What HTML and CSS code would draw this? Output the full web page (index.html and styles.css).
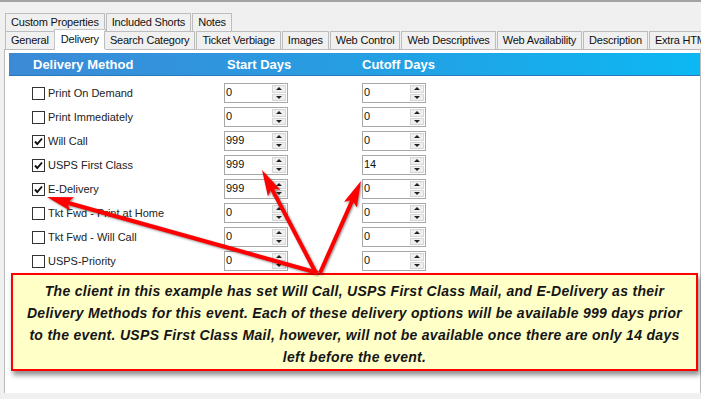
FILE: index.html
```html
<!DOCTYPE html>
<html lang="en">
<head>
    <meta charset="UTF-8">
    <title>Event - Delivery</title>
    <link rel="stylesheet" href="styles.css">
</head>
<body>
    <div class="window">
        <!-- Tab strip -->
        <div class="tabstrip">
            <div class="tab-row">
                <span class="tab">Custom Properties</span>
                <span class="tab">Included Shorts</span>
                <span class="tab">Notes</span>
            </div>
            <div class="tab-row front">
                <span class="tab">General</span>
                <span class="tab active">Delivery</span>
                <span class="tab">Search Category</span>
                <span class="tab">Ticket Verbiage</span>
                <span class="tab">Images</span>
                <span class="tab">Web Control</span>
                <span class="tab">Web Descriptives</span>
                <span class="tab">Web Availability</span>
                <span class="tab">Description</span>
                <span class="tab">Extra HTML</span>
            </div>
        </div>

        <!-- Delivery panel -->
        <div class="panel">
            <div class="grid-head">
                <span>Delivery Method</span>
                <span>Start Days</span>
                <span>Cutoff Days</span>
            </div>

            <div class="methods">
                <div class="method">
                    <label class="check"><span class="box"></span>Print On Demand</label>
                    <div class="spin"><span class="val">0</span><span class="btns"><i class="up"></i><i class="dn"></i></span></div>
                    <div class="spin"><span class="val">0</span><span class="btns"><i class="up"></i><i class="dn"></i></span></div>
                </div>
                <div class="method">
                    <label class="check"><span class="box"></span>Print Immediately</label>
                    <div class="spin"><span class="val">0</span><span class="btns"><i class="up"></i><i class="dn"></i></span></div>
                    <div class="spin"><span class="val">0</span><span class="btns"><i class="up"></i><i class="dn"></i></span></div>
                </div>
                <div class="method">
                    <label class="check"><span class="box"><svg viewBox="0 0 11 11"><path d="M2 5.5 4.3 8 9 2.5"/></svg></span>Will Call</label>
                    <div class="spin"><span class="val">999</span><span class="btns"><i class="up"></i><i class="dn"></i></span></div>
                    <div class="spin"><span class="val">0</span><span class="btns"><i class="up"></i><i class="dn"></i></span></div>
                </div>
                <div class="method">
                    <label class="check"><span class="box"><svg viewBox="0 0 11 11"><path d="M2 5.5 4.3 8 9 2.5"/></svg></span>USPS First Class</label>
                    <div class="spin"><span class="val">999</span><span class="btns"><i class="up"></i><i class="dn"></i></span></div>
                    <div class="spin"><span class="val">14</span><span class="btns"><i class="up"></i><i class="dn"></i></span></div>
                </div>
                <div class="method">
                    <label class="check"><span class="box"><svg viewBox="0 0 11 11"><path d="M2 5.5 4.3 8 9 2.5"/></svg></span>E-Delivery</label>
                    <div class="spin"><span class="val">999</span><span class="btns"><i class="up"></i><i class="dn"></i></span></div>
                    <div class="spin"><span class="val">0</span><span class="btns"><i class="up"></i><i class="dn"></i></span></div>
                </div>
                <div class="method">
                    <label class="check"><span class="box"></span>Tkt Fwd - Print at Home</label>
                    <div class="spin"><span class="val">0</span><span class="btns"><i class="up"></i><i class="dn"></i></span></div>
                    <div class="spin"><span class="val">0</span><span class="btns"><i class="up"></i><i class="dn"></i></span></div>
                </div>
                <div class="method">
                    <label class="check"><span class="box"></span>Tkt Fwd - Will Call</label>
                    <div class="spin"><span class="val">0</span><span class="btns"><i class="up"></i><i class="dn"></i></span></div>
                    <div class="spin"><span class="val">0</span><span class="btns"><i class="up"></i><i class="dn"></i></span></div>
                </div>
                <div class="method">
                    <label class="check"><span class="box"></span>USPS-Priority</label>
                    <div class="spin"><span class="val">0</span><span class="btns"><i class="up"></i><i class="dn"></i></span></div>
                    <div class="spin"><span class="val">0</span><span class="btns"><i class="up"></i><i class="dn"></i></span></div>
                </div>
            </div>

            <!-- Annotation -->
            <div class="callout">
                <p>The client in this example has set Will Call, USPS First Class Mail, and E-Delivery as their<br>
                Delivery Methods for this event. Each of these delivery options will be available 999 days prior<br>
                to the event. USPS First Class Mail, however, will not be available once there are only 14 days<br>
                left before the event.</p>
            </div>
        </div>

        <!-- Annotation arrows -->
        <svg class="arrows" viewBox="0 0 701 399">
            <defs>
                <marker id="head" markerUnits="userSpaceOnUse" viewBox="0 0 26 14" refX="14" refY="7" markerWidth="26" markerHeight="14" orient="auto">
                    <path d="M0 0 L26 7 L0 14 L5 7 Z" fill="#f00"/>
                </marker>
            </defs>
            <line x1="318" y1="273" x2="58.6" y2="200.2" marker-end="url(#head)"/>
            <line x1="316" y1="273" x2="267.6" y2="180.6" marker-end="url(#head)"/>
            <line x1="320" y1="273" x2="356.1" y2="191.9" marker-end="url(#head)"/>
        </svg>
    </div>
</body>
</html>
```

FILE: styles.css
```css
* { margin: 0; padding: 0; box-sizing: border-box; }
body { background: #f0f0f0; font-family: 'Liberation Sans', Arial, sans-serif; color: #1e1e1e; overflow: hidden; }

/* Window */
.window { position: relative; width: 701px; height: 399px; border-top: 2px solid #a3a3a3; }

/* Tabs */
.tabstrip { padding-top: 11px; }
.tab-row { display: flex; align-items: flex-end; height: 18px; padding-left: 5px; white-space: nowrap; }
.tab-row.front { position: relative; z-index: 2; }
.tab { flex-shrink: 0; height: 18px; padding: 0 5px; margin-right: 1px; border: 1px solid #bdbdbd; border-bottom: none; background: #f0f0f0; font-size: 11px; line-height: 16px; letter-spacing: -0.2px; color: #111; }
.tab.active { height: 21px; margin: 0 -1px -1px -2px; padding: 0 6px; background: #fff; border-color: #c6c6c6; line-height: 18px; }
.tab.active + .tab { margin-left: -1px; }

/* Panel */
.panel { margin-left: 4px; width: 697px; background: #fff; border: 1px solid #bcbcbc; border-bottom: none; padding: 3px 0 22px 4px; }
.grid-head { display: grid; grid-template-columns: 194px 135px 1fr; height: 23px; padding-left: 24px; align-items: center; background: linear-gradient(90deg, #3c8ad6, #24a0e4 55%, #0cb8f3); border-bottom: 1px solid #2a78b8; color: #fff; font-size: 13px; font-weight: 700; }

/* Method rows */
.methods { padding-top: 5px; }
.method { display: grid; grid-template-columns: 192px 138px 64px; height: 24px; padding-left: 23px; align-items: center; }
.check { display: flex; align-items: center; gap: 3px; font-size: 11px; color: #222; }
.box { width: 13px; height: 13px; border: 1px solid #333; background: #fff; display: flex; align-items: center; justify-content: center; }
.box svg { width: 11px; height: 11px; fill: none; stroke: #111; stroke-width: 1.9; }

/* Spin box */
.spin { width: 64px; height: 20px; border: 1px solid #a8a8a8; background: #fff; display: flex; }
.spin .val { flex: 1; padding-left: 1px; font-size: 11px; line-height: 17px; color: #111; }
.btns { width: 15px; display: flex; flex-direction: column; gap: 1px; padding: 1px 1px 1px 0; }
.btns i { flex: 1; background: #efefef; border: 1px solid #d6d6d6; display: flex; align-items: center; justify-content: center; }
.btns i::before { content: ""; border-left: 3px solid transparent; border-right: 3px solid transparent; }
.btns .up::before { border-bottom: 3px solid #222; }
.btns .dn::before { border-top: 3px solid #222; }

/* Callout */
.callout { margin: 0 2px; border: 2px solid #f00; background: #ffffc8; padding: 5px 0 1px; box-shadow: 2px 4px 5px rgba(0, 0, 0, 0.45); text-align: center; }
.callout p { font-size: 14px; line-height: 22px; font-weight: 700; font-style: italic; letter-spacing: 0.3px; color: #151515; }

/* Arrows */
.arrows { position: absolute; top: -2px; left: 0; width: 701px; height: 399px; pointer-events: none; filter: drop-shadow(1px 1px 1px rgba(0, 0, 0, 0.45)); }
.arrows line { stroke: #f00; stroke-width: 4; }
```
